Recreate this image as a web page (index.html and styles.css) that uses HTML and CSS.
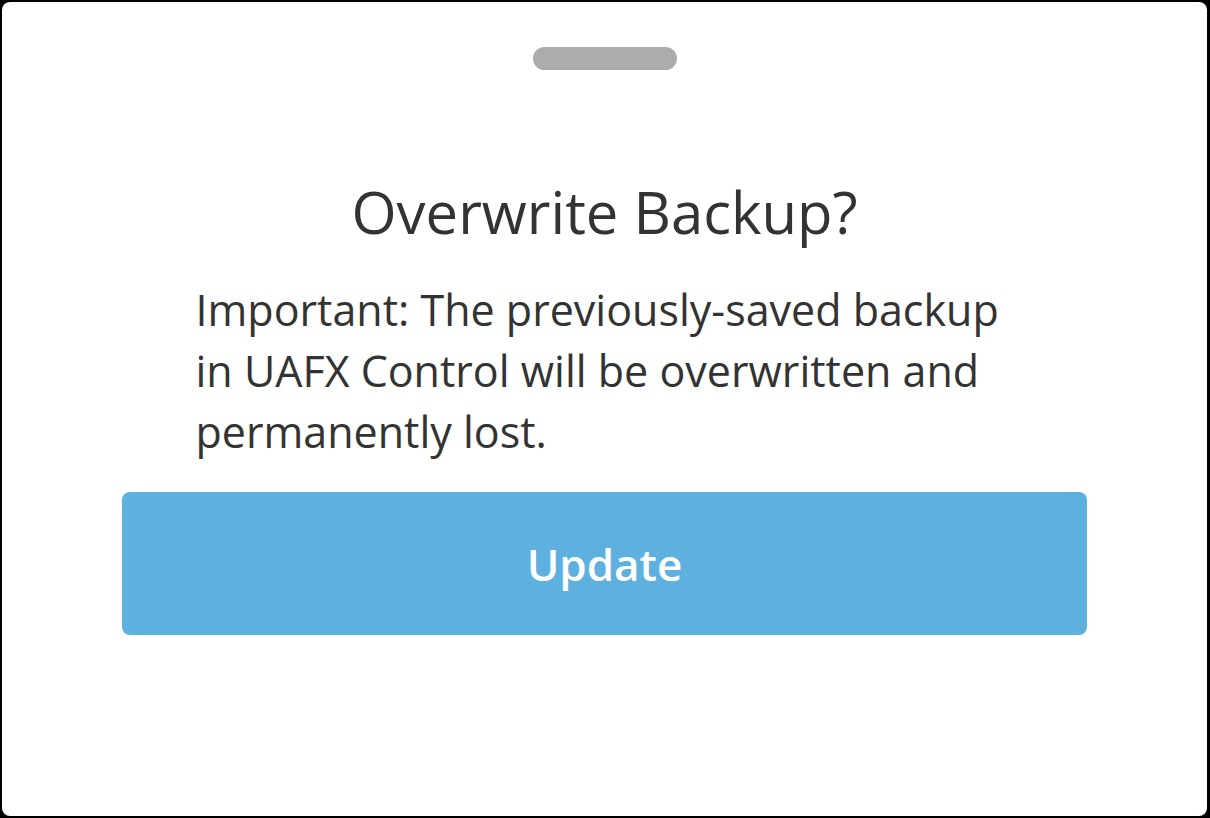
FILE: index.html
```html
<!DOCTYPE html>
<html>
<head>
<meta charset="utf-8">
<link rel="stylesheet" href="styles.css">
</head>
<body>
<div class="sheet">
  <div class="handle"></div>
  <h1 class="title">Overwrite Backup?</h1>
  <p class="message">Important: The previously-saved backup in UAFX Control will be overwritten and permanently lost.</p>
  <button class="update-btn">Update</button>
</div>
</body>
</html>
```
FILE: styles.css
```css
html, body {
  margin: 0;
  padding: 0;
  height: 100%;
  background: #000;
}
body {
  padding: 2px 3px 2px 2px;
  box-sizing: border-box;
  font-family: "Open Sans", "Noto Sans", sans-serif;
}
.sheet {
  height: 100%;
  background: #fff;
  border-radius: 8px;
  display: flex;
  flex-direction: column;
  align-items: center;
}
.handle {
  width: 144px;
  height: 23px;
  border-radius: 12px;
  background: #acacac;
  margin-top: 45px;
}
.title {
  margin: 105px 0 0 0;
  font-size: 58px;
  font-weight: 400;
  line-height: 74px;
  color: #333;
}
.message {
  width: 818px;
  margin: 30px 0 0 0;
  font-size: 43px;
  line-height: 61px;
  color: #333;
}
.update-btn {
  margin-top: 30px;
  width: 965px;
  height: 143px;
  flex-shrink: 0;
  border: none;
  border-radius: 8px;
  background: #5eb1df;
  color: #fff;
  font-family: "Open Sans", "Noto Sans", sans-serif;
  font-size: 44px;
  font-weight: 600;
}
```
